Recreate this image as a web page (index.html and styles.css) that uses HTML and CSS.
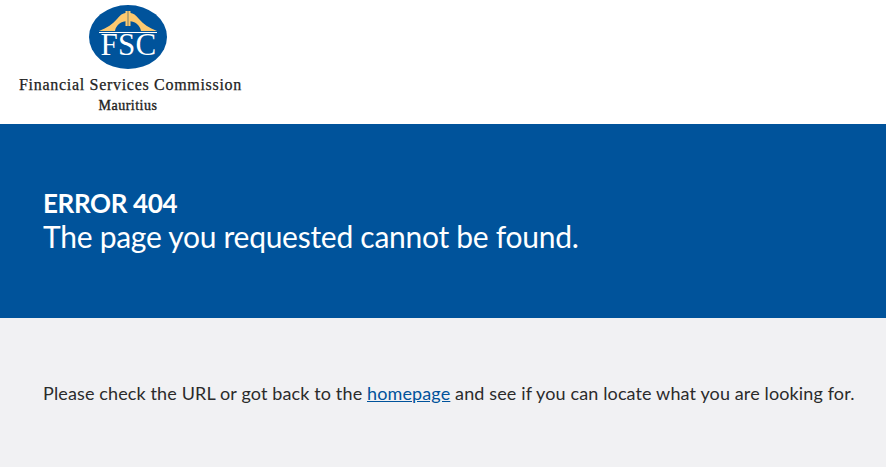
FILE: index.html
```html
<!DOCTYPE html>
<html lang="en">
<head>
<meta charset="utf-8">
<title>Error 404</title>
<link rel="stylesheet" href="styles.css">
</head>
<body>
<header class="site-header">
  <a class="logo" href="#">
    <svg class="logo-mark" width="80" height="66" viewBox="0 0 80 66" aria-hidden="true">
      <ellipse cx="40" cy="33" rx="39" ry="32" fill="#00539b"/>
      <path d="M11 27 C19 24 25 20 29 15 C32 11 35 9 37.5 9 L42.5 9 C45 9 48 11 51 15 C55 20 61 24 69 27 L53 27 C52 21 47 17 40 17 C33 17 28 21 27 27 Z" fill="#fdc96f"/>
      <rect x="37.5" y="7" width="5" height="15" fill="#fdc96f"/>
      <rect x="39.4" y="7" width="1.2" height="15" fill="#8f8a6a"/>
      <rect x="11" y="28" width="58" height="1" fill="#fff"/>
      <text class="logo-fsc" x="40.5" y="51" text-anchor="middle">FSC</text>
    </svg>
    <span class="logo-name">Financial Services Commission</span>
    <span class="logo-place">Mauritius</span>
  </a>
</header>
<section class="hero">
  <h1 class="hero-title">ERROR 404</h1>
  <p class="hero-sub">The page you requested cannot be found.</p>
</section>
<section class="notice">
  <p class="notice-text">Please check the URL or got back to the <a href="#">homepage</a> and see if you can locate what you are looking for.</p>
</section>
</body>
</html>
```

FILE: styles.css
```css
* { box-sizing: border-box; }
html, body { margin: 0; padding: 0; background: #fff; }
body { font-family: Lato, "Open Sans", sans-serif; color: #2b2b2b; }

.site-header { height: 124px; padding-left: 18px; }
.logo {
  display: flex;
  flex-direction: column;
  align-items: center;
  width: 225px;
  color: #222;
  text-decoration: none;
  font-family: "Liberation Serif", serif;
}
.logo-mark { display: block; margin: 4px 5px 0 0; }
.logo-fsc { font-family: "Liberation Serif", serif; font-size: 31px; fill: #fff; letter-spacing: 0.2px; }
.logo-name { font-size: 16px; line-height: 18px; margin-top: 6px; letter-spacing: 0.7px; white-space: nowrap; -webkit-text-stroke: 0.25px #222; }
.logo-place { font-size: 14px; line-height: 15px; margin: 4px 5px 0 0; letter-spacing: 0.5px; -webkit-text-stroke: 0.35px #222; white-space: nowrap; }

.hero {
  height: 194px;
  background: #00539b;
  color: #fff;
  padding: 63px 43px 0;
}
.hero-title { margin: 0; font-size: 26px; line-height: 32px; font-weight: 700; letter-spacing: -0.35px; }
.hero-sub { margin: 0; font-size: 30px; line-height: 35px; letter-spacing: -0.27px; }

.notice { height: 149px; background: #f1f1f3; padding: 63px 43px 0; }
.notice-text { margin: 0; font-size: 18px; line-height: 24px; letter-spacing: 0.13px; white-space: nowrap; }
.notice-text a { color: #00539b; }
```
